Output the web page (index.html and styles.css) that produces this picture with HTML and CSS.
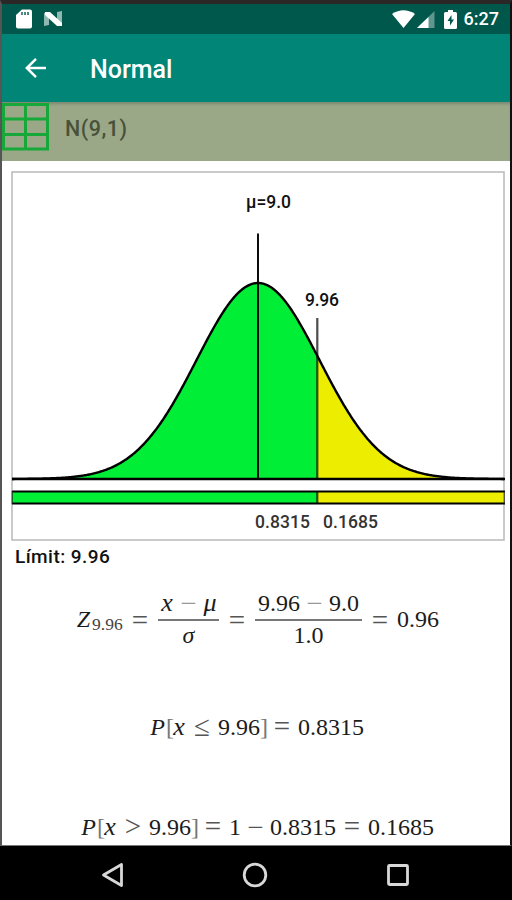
FILE: index.html
```html
<!DOCTYPE html>
<html lang="ca">
<head>
  <meta charset="UTF-8">
  <title>Normal</title>
  <link rel="stylesheet" href="styles.css">
</head>
<body>
  <div class="phone">
    <div class="status">
      <svg class="sd" width="16" height="20" viewBox="0 0 16 20">
        <path d="M6 0.5h8q2 0 2 2v15q0 2-2 2H2q-2 0-2-2V6z" fill="#fff"/>
        <path d="M6 3v3M9 3v3M12 3v3" stroke="#00574b" stroke-width="1.4"/>
      </svg>
      <svg class="nougat" width="19" height="16" viewBox="0 0 19 16">
        <path d="M0 2l5-1v13l-5 1zM13 1l5-1v14l-5 1z" fill="#8fb8b1"/>
        <path d="M1 1h5l12 11v3h-5L1 4z" fill="#fff"/>
      </svg>
      <svg class="wifi" width="23" height="18" viewBox="0 0 23 18">
        <path d="M0 4Q11.500-3.500 23 4L11.500 18z" fill="#fff"/>
      </svg>
      <svg class="signal" width="18" height="17" viewBox="0 0 18 17">
        <path d="M17.500 0v17H0z" fill="#5f968e"/>
        <path d="M11.500 6v11H0z" fill="#fff"/>
      </svg>
      <svg class="battery" width="13" height="19" viewBox="0 0 13 19">
        <path d="M4 0h5v2h2.500q1.500 0 1.500 1.500v14q0 1.500-1.500 1.500h-10Q0 19 0 17.500v-14Q0 2 1.500 2H4z" fill="#fff"/>
        <path d="M7.500 5L3.500 11h2.500v4.500L10 9.500H7.500z" fill="#00574b"/>
      </svg>
      <span class="clock">6:27</span>
    </div>

    <div class="appbar">
      <svg width="22" height="22" viewBox="0 0 22 22">
        <path d="M21 11H2.500M11 1.800L1.800 11l9.200 9.200" fill="none" stroke="#fff" stroke-width="2.500"/>
      </svg>
      <h1>Normal</h1>
    </div>

    <div class="subbar">
      <svg width="48" height="49" viewBox="0 0 48 49">
        <path d="M1.500 1.500h44v44.500h-44zM23.500 1.500V46M1.500 16h44M1.500 31.500h44" fill="none" stroke="#16a839" stroke-width="3"/>
      </svg>
      <span>N(9,1)</span>
    </div>

    <div class="content">
      <svg class="chart" width="494" height="370" viewBox="11 171 494 370">
        <rect x="12" y="172" width="492" height="368" fill="#fff" stroke="#b9b9b9" stroke-width="1.500"/>
        <path id="left" fill="#00ef36"/>
        <path id="right" fill="#eded00"/>
        <path id="curve" fill="none" stroke="#000" stroke-width="2.400"/>
        <path d="M12 479H505" stroke="#000" stroke-width="2.400"/>
        <path d="M12 491.500H317V503.500H12z" fill="#00ef36"/>
        <path d="M317 491.500H504V503.500H317z" fill="#eded00"/>
        <path d="M12 491.500H505M12 503.500H505" stroke="#000" stroke-width="2.200"/>
        <path d="M504.200 491v13M12.200 491v13" stroke="#222" stroke-width="1"/>
        <path d="M258 233.500V479" stroke="#000" stroke-width="1.900"/>
        <path d="M317.300 318V479M317.300 491V504" stroke="#000" stroke-opacity="0.700" stroke-width="2.200"/>
        <text x="246" y="208" textLength="45">μ=9.0</text>
        <text x="305" y="306" textLength="34">9.96</text>
        <text class="prob" x="255" y="528" textLength="55">0.8315</text>
        <text class="prob" x="323" y="528" textLength="55">0.1685</text>
      </svg>

      <p class="limit">Límit: 9.96</p>

      <div class="formula first">
        <i class="cap">Z</i><small>9.96</small>
        <b class="rel">=</b>
        <span class="frac">
          <span class="num"><i class="x">x</i><b class="bin">−</b><i class="mu">μ</i></span>
          <span class="den"><i>σ</i></span>
        </span>
        <b class="rel">=</b>
        <span class="frac wide">
          <span class="num">9.96<b class="bin">−</b>9.0</span>
          <span class="den">1.0</span>
        </span>
        <b class="rel">=</b><span class="res">0.96</span>
      </div>
      <div class="formula second">
        <i class="cap">P</i><em>[</em><i class="x">x</i><b class="rel">≤</b>9.96<em>]</em><b class="rel">=</b>0.8315
      </div>
      <div class="formula third">
        <i class="cap">P</i><em>[</em><i class="x">x</i><b class="rel">&gt;</b>9.96<em>]</em><b class="rel">=</b>1<b class="bin">−</b>0.8315<b class="rel">=</b>0.1685
      </div>
    </div>
  </div>

  <div class="nav">
    <svg width="24" height="26" viewBox="0 0 24 26">
      <path d="M20.500 2.500v21L2.500 13z"/>
    </svg>
    <svg width="26" height="26" viewBox="0 0 26 26">
      <circle cx="13" cy="13" r="10.800"/>
    </svg>
    <svg width="26" height="26" viewBox="0 0 26 26">
      <rect x="3.500" y="3.500" width="19" height="19" rx="1"/>
    </svg>
  </div>

  <script>
    // normal curve, one sigma = 61.5 units
    function points(from, to) {
      const p = [];
      for (let x = from; x <= to; x++) {
        const z = (x - 258) / 61.5;
        p.push(x + ' ' + (479 - 196 * Math.exp(-z * z / 2)).toFixed(2));
      }
      return p.join('L');
    }
    document.getElementById('left').setAttribute('d', 'M12 479L' + points(12, 317) + 'V479z');
    document.getElementById('right').setAttribute('d', 'M317 479L' + points(317, 504) + 'V479z');
    document.getElementById('curve').setAttribute('d', 'M' + points(12, 504));
  </script>
</body>
</html>
```

FILE: styles.css
```css
* {
  box-sizing: border-box;
}
body {
  margin: 0;
  width: 512px;
  height: 900px;
  overflow: hidden;
  background: #000;
  font-family: Roboto, sans-serif;
  font-weight: 500;
}
svg {
  display: block;
  flex: none;
}
.phone {
  height: 846px;
  border-top: 4px solid #2b2727;
  border-left: 2px solid #555;
  border-right: 2px solid #111;
  border-bottom: 1px solid #777;
  background: #fff;
  overflow: hidden;
}
.status {
  display: flex;
  align-items: center;
  height: 30px;
  padding: 0 11px 0 14px;
  background: #00574b;
  color: #fff;
}
.nougat {
  margin-left: 12px;
}
.wifi {
  margin-left: auto;
}
.signal {
  margin-left: 2px;
}
.battery {
  margin: 0 7px 0 9px;
}
.clock {
  font-size: 18px;
  line-height: 32px;
}
.appbar {
  display: flex;
  align-items: center;
  height: 68px;
  padding-left: 23px;
  background: #008577;
  color: #fff;
}
.appbar h1 {
  margin: 2px 0 0 43px;
  font-size: 25px;
  font-weight: 500;
}
.subbar {
  display: flex;
  height: 59px;
  padding-top: 1px;
  background: #9aa888;
  box-shadow: inset 0 3px 3px -1px #7d8971;
  color: #485139;
}
.subbar span {
  margin-left: 15px;
  font-size: 21.5px;
  line-height: 52px;
  letter-spacing: 0.5px;
}
.content {
  padding: 10px 0 0 9px;
}
.chart text {
  font-size: 17.5px;
  fill: #111;
}
.chart .prob {
  fill: #333;
}
.limit {
  margin: 4px 0 0 4px;
  font-size: 19px;
  line-height: 24px;
  letter-spacing: 0.45px;
  color: #111;
}

/* formulas */
.formula {
  display: flex;
  align-items: center;
  height: 30px;
  font: 24px/30px "Liberation Serif", serif;
  color: #1c1c1c;
}
.formula i {
  width: 14px;
  text-align: center;
}
.formula .cap {
  width: 17px;
}
.formula .x,
.formula .mu {
  font-size: 26px;
}
.formula small {
  width: 31px;
  padding-top: 5px;
  font-size: 17.5px;
  line-height: 20px;
  color: #444;
}
.formula em {
  width: 6px;
  font-style: normal;
  text-align: center;
  color: #777;
}
.formula b {
  font-size: 29px;
  font-weight: 400;
  text-align: center;
  color: #555;
}
.rel {
  width: 32px;
  padding-bottom: 2px;
}
.bin {
  width: 29px;
}
.first {
  height: 64px;
  margin: 20px 0 0 64px;
}
.first .rel {
  width: 34px;
}
.first > .cap,
.first > .res {
  padding-bottom: 5px;
}
.second {
  margin: 59px 0 0 138px;
}
.third {
  margin: 70px 0 0 69px;
}
.frac {
  width: 61px;
  margin: 0 1px;
}
.frac.wide {
  width: 107px;
}
.num,
.den {
  display: flex;
  justify-content: center;
  align-items: center;
  height: 32px;
}
.num {
  padding-bottom: 2px;
  border-bottom: 2px solid #777;
}
.den {
  padding-bottom: 4px;
}
.num .bin {
  color: #999;
}
.nav {
  display: flex;
  align-items: center;
  height: 54px;
  padding: 3px 0 0 101px;
  gap: 117px;
  background: #000;
}
.nav svg {
  fill: none;
  stroke: #d8d8d8;
  stroke-width: 2.8;
  stroke-linejoin: round;
}
```
